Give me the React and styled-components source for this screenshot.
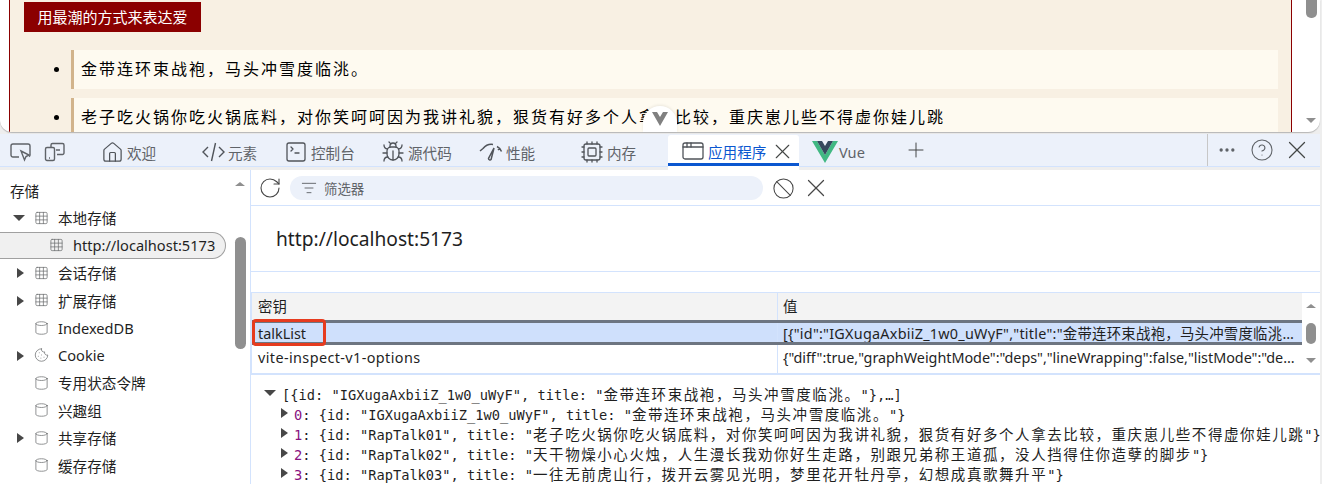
import styled, { createGlobalStyle } from 'styled-components'
import {
  AppWindow,
  Ban,
  Bug,
  CircleHelp,
  Cookie,
  Cpu,
  Cylinder,
  Ellipsis,
  Grid3x3,
  House,
  ListFilter,
  Plus,
  RotateCw,
  SquareTerminal,
  X,
} from 'lucide-react'

const uiFont = `"Noto Sans", "Noto Sans CJK SC", sans-serif`
const monoFont = `"DejaVu Sans Mono", "Noto Sans CJK SC", monospace`
const lineBlue = '#d3e3fd'
const textGrey = '#5f6368'
const textDark = '#1f1f1f'

const GlobalStyle = createGlobalStyle`
  html, body { margin: 0; padding: 0; background: #eeeeee; }
  * { box-sizing: border-box; }
`

const Shell = styled.div`
  display: flex;
  flex-direction: column;
  position: relative;
  width: 1322px;
  height: 484px;
  padding-right: 2px;
  overflow: hidden;
  background: #eeeeee;
  font-family: ${uiFont};
  color: ${textDark};
`

/* inspected page */
const Page = styled.div`
  display: flex;
  flex: none;
  height: 132px;
  padding-left: 9px;
  overflow: hidden;
  background: #ffffff;
  border-radius: 0 0 12px 12px;
  box-shadow: 0 1px 1px #b5b5b5;
`

const Article = styled.div`
  flex: none;
  width: 1283px;
  padding: 2px 13px 0 14px;
  background: #f8f0e3;
  border-left: 1px solid #8b0000;
  border-right: 1px solid #8b0000;
`

const Banner = styled.h3`
  width: 177px;
  height: 30px;
  margin: 0 0 18px;
  background: #8b0000;
  color: #ffffff;
  font: 400 15px/30px "Noto Sans CJK SC", sans-serif;
  text-align: center;
`

const TalkList = styled.ul`
  margin: 0;
  padding: 0 0 0 47px;
`

const TalkItem = styled.li`
  height: 39px;
  margin-bottom: 9px;
  padding-left: 7px;
  background: #fefaf0;
  border-left: 3px solid #d2b48c;
  color: #000000;
  font: 400 16px/36px "Noto Sans CJK SC", serif;
  letter-spacing: 2px;
  white-space: nowrap;
  &::marker { font-size: 13px; }
`

const PageScroll = styled.div`
  display: flex;
  flex: 1;
  flex-direction: column;
  align-items: center;
  justify-content: space-between;
  padding: 0 0 9px 10px;
`

const PageThumb = styled.div`
  width: 11px;
  height: 18px;
  background: #8f8f8f;
  border-radius: 0 0 5px 5px;
`

const Arrow = styled.span`
  flex: none;
  display: block;
  width: 0;
  height: 0;
  ${({ $dir = 'down', $size = 5, $color = '#5f6368' }) => {
    const s = $size
    if ($dir === 'right') return `border-top: ${s}px solid transparent; border-bottom: ${s}px solid transparent; border-left: ${s + 2}px solid ${$color};`
    if ($dir === 'up') return `border-left: ${s}px solid transparent; border-right: ${s}px solid transparent; border-bottom: ${s - 1}px solid ${$color};`
    return `border-left: ${s + 1}px solid transparent; border-right: ${s + 1}px solid transparent; border-top: ${s + 1}px solid ${$color};`
  }}
`

const CollapseBump = styled.div`
  position: absolute;
  left: 643px;
  top: 106px;
  display: flex;
  align-items: center;
  justify-content: center;
  width: 34px;
  height: 26px;
  background: #ffffff;
  border-radius: 17px 17px 0 0;
  box-shadow: 0 -1px 3px rgba(0, 0, 0, 0.08);
`

/* devtools tab strip */
const TabBar = styled.div`
  display: flex;
  flex: none;
  align-items: center;
  height: 33px;
  margin-top: 2px;
  background: #ecf1fa;
  border-bottom: 1px solid ${lineBlue};
`

const ToolIcon = styled.span`
  display: flex;
  flex: none;
  align-items: center;
  justify-content: center;
  width: ${({ $w }) => $w || 34}px;
  color: ${textGrey};
`

const ToolGroup = styled.div`
  display: flex;
  flex: none;
  align-items: center;
  width: 97px;
  padding: 4px 0 0 4px;
`

const Tab = styled.div`
  display: flex;
  flex: none;
  align-items: center;
  width: ${({ $w }) => $w}px;
  height: 32px;
  padding-top: 4px;
  color: ${textGrey};
  font-size: 14.6px;
  white-space: nowrap;
`

const TabIcon = styled.span`
  display: flex;
  flex: none;
  justify-content: center;
  width: 30px;
  color: #50545a;
`

const ActiveTab = styled(Tab)`
  position: relative;
  align-self: flex-end;
  height: 31px;
  margin-right: 13px;
  padding: 4px 0 0 10px;
  background: #ffffff;
  border-radius: 3px 3px 0 0;
  border-bottom: 3px solid #0b57d0;
  color: #0b57d0;
  &::after {
    content: '';
    position: absolute;
    left: 0;
    right: 0;
    top: 28px;
    height: 7px;
    background: linear-gradient(#0b57d0 3px, #ffffff 3px);
  }
`

const TabClose = styled.span`
  display: flex;
  margin-left: 4px;
  color: #444746;
`

const VueMark = styled.span`
  display: flex;
  flex: none;
  width: 27px;
`

const TabSpacer = styled.div`
  flex: 1;
`

const RightTools = styled.div`
  display: flex;
  flex: none;
  align-items: center;
  height: 32px;
  margin-right: 6px;
  padding-left: 2px;
  border-left: 1px solid #c7c7c7;
`

/* application panel */
const Panels = styled.div`
  display: flex;
  flex: 1;
  min-height: 0;
  margin-top: 3px;
  background: #ffffff;
`

const Sidebar = styled.aside`
  display: flex;
  flex: none;
  width: 251px;
  border-right: 1px solid ${lineBlue};
`

const Tree = styled.div`
  flex: none;
  width: 234px;
  padding-top: 8px;
  overflow: hidden;
`

const TreeTitle = styled.div`
  height: 26px;
  padding-left: 10px;
  font-size: 14.6px;
  line-height: 26px;
`

const TreeRow = styled.div`
  display: flex;
  align-items: center;
  position: relative;
  width: ${({ $selected }) => ($selected ? '226px' : '100%')};
  height: 27.5px;
  padding-left: ${({ $level }) => ($level === 2 ? 49 : 34)}px;
  font-size: 14.6px;
  white-space: nowrap;
  ${({ $selected }) =>
    $selected &&
    `background: #f0f0f0;
     border: 1px solid #a0a0a0;
     border-left: 0;
     border-radius: 0 14px 14px 0;`}
`

const TreeToggle = styled.span`
  position: absolute;
  left: ${({ $open }) => ($open ? 13 : 17)}px;
  top: ${({ $open }) => ($open ? 11 : 9)}px;
`

const TreeIcon = styled.span`
  display: flex;
  flex: none;
  justify-content: center;
  width: 15px;
  margin-right: 9px;
  color: #6e7072;
`

const SideScroll = styled.div`
  display: flex;
  flex: 1;
  flex-direction: column;
  align-items: center;
  padding: 12px 4px 0 0;
`

const SideThumb = styled.div`
  width: 11px;
  height: 112px;
  margin-top: 51px;
  background: #8f8f8f;
  border-radius: 6px;
`

const Main = styled.main`
  display: flex;
  flex: 1;
  flex-direction: column;
  min-width: 0;
`

const FilterBar = styled.div`
  display: flex;
  flex: none;
  align-items: center;
  height: 36px;
  padding: 1px 0 0 7px;
  border-bottom: 1px solid ${lineBlue};
`

const Reload = styled.span`
  display: flex;
  width: 32px;
  color: #474747;
`

const FilterPill = styled.div`
  display: flex;
  align-items: center;
  width: 473px;
  height: 24px;
  padding: 0 0 1px 11px;
  gap: 7px;
  background: #ecf1fa;
  border-radius: 12px;
  color: ${textGrey};
  font-size: 13.4px;
`

const BarIcon = styled.span`
  display: flex;
  margin-left: ${({ $gap }) => $gap}px;
  color: #474747;
`

const Origin = styled.div`
  flex: none;
  height: 66px;
  padding-left: 25px;
  font-size: 19.2px;
  line-height: 66px;
  border-bottom: 1px solid ${lineBlue};
`

const StorageTable = styled.div`
  display: flex;
  flex: none;
  position: relative;
  height: 83px;
  margin-top: 20px;
  background: #ffffff;
  border-top: 1px solid ${lineBlue};
  border-bottom: 2px solid ${lineBlue};
  border-left: 1px solid ${lineBlue};
`

const TableBody = styled.div`
  flex: 1;
  min-width: 0;
`

const TableRow = styled.div`
  display: grid;
  grid-template-columns: 525px 1fr;
  height: ${({ $h }) => $h}px;
  font-size: 14.4px;
  ${({ $selected }) =>
    $selected &&
    `background: #cfe0fc;
     border-top: 3px solid #6d7581;
     border-bottom: 3px solid #6d7581;`}
  ${({ $head }) => $head && `background: #f3f3f3;`}
`

const Cell = styled.div`
  padding: 0 6px;
  overflow: hidden;
  line-height: ${({ $lh }) => $lh}px;
  letter-spacing: ${({ $track }) => $track || 0}px;
  text-overflow: ellipsis;
  white-space: nowrap;
  & + & {
    padding-left: 5px;
    border-left: 1px solid ${lineBlue};
  }
`

const TableScroll = styled.div`
  display: flex;
  flex: none;
  flex-direction: column;
  align-items: center;
  width: 18px;
  padding-top: 11px;
`

const TableThumb = styled.div`
  width: 10px;
  height: 21px;
  margin: 15px 0 14px;
  background: #8f8f8f;
  border-radius: 5px;
`

const Callout = styled.div`
  position: absolute;
  left: 0;
  top: 26px;
  width: 74px;
  height: 27px;
  border: 3px solid #e63b1f;
  border-radius: 4px;
`

const Preview = styled.div`
  flex: 1;
  padding-top: 8px;
  overflow: hidden;
  font-family: ${monoFont};
  font-size: 13.7px;
`

const PreviewRow = styled.div`
  display: flex;
  align-items: center;
  height: 20px;
  padding-left: ${({ $indent }) => $indent}px;
  gap: 6px;
  white-space: nowrap;
`

const Index = styled.span`
  color: #881280;
`

const Han = styled.span`
  font-size: 14.5px;
  letter-spacing: 1.57px;
`

const VueLogo = () => (
  <svg width="26" height="24" viewBox="0 0 26 22">
    <path d="M0 0h5l8 14L21 0h5L13 22z" fill="#41b883" />
    <path d="M5 0h5l3 5 3-5h5l-8 14z" fill="#35495e" />
  </svg>
)

const ElementsIcon = () => (
  <svg width="23" height="20" viewBox="0 0 23 20" fill="none" stroke="#50545a" strokeWidth="1.4">
    <path d="M6 5l-5 5 5 5M17 5l5 5-5 5M13.5 1L9.500 19" />
  </svg>
)

const InspectIcon = () => (
  <svg width="22" height="20" viewBox="0 0 22 20" fill="none" stroke="#5f6368" strokeWidth="1.4">
    <path d="M9 15H3a2 2 0 0 1-2-2V4a2 2 0 0 1 2-2h15a2 2 0 0 1 2 2v9a2 2 0 0 1-1 1.700" />
    <path d="M11 9l8 4-3 1.500-1.500 3.500z" />
  </svg>
)

const DeviceIcon = () => (
  <svg width="22" height="20" viewBox="0 0 22 20" fill="none" stroke="#5f6368" strokeWidth="1.4">
    <path d="M7 5V3a1.500 1.500 0 0 1 1.500-1.500h10A1.500 1.500 0 0 1 20 3v8a1.500 1.500 0 0 1-1.500 1.500H13" />
    <rect x="1.500" y="5.500" width="9" height="13" rx="1.500" />
    <path d="M12 8h4M5 16h1" />
  </svg>
)

const PerformanceIcon = () => (
  <svg width="24" height="20" viewBox="0 0 24 20" fill="none" stroke="#50545a" strokeWidth="1.5">
    <path d="M1 9l3-2.500M4 6.500C7 3 11 2 14 2.500M18 4.500c2 1 3.500 2.500 4.500 5M21 6l-2 2" />
    <path d="M15 6L9.500 16.500a1.500 1.500 0 0 0 2.600 1z" />
  </svg>
)

const tabs = [
  { label: '欢迎', width: 101, icon: <House size={23} strokeWidth={1.3} /> },
  { label: '元素', width: 83, icon: <ElementsIcon /> },
  { label: '控制台', width: 97, icon: <SquareTerminal size={24} strokeWidth={1.3} /> },
  { label: '源代码', width: 98, icon: <Bug size={24} strokeWidth={1.3} /> },
  { label: '性能', width: 101, icon: <PerformanceIcon /> },
  { label: '内存', width: 91, icon: <Cpu size={24} strokeWidth={1.3} /> },
]

const grid = <Grid3x3 size={16} strokeWidth={1.2} />
const can = <Cylinder size={16} strokeWidth={1.2} />

const treeRows = [
  { label: '本地存储', icon: grid, toggle: 'open' },
  { label: 'http://localhost:5173', icon: grid, level: 2, selected: true },
  { label: '会话存储', icon: grid, toggle: 'closed' },
  { label: '扩展存储', icon: grid, toggle: 'closed' },
  { label: 'IndexedDB', icon: can },
  { label: 'Cookie', icon: <Cookie size={16} strokeWidth={1.2} />, toggle: 'closed' },
  { label: '专用状态令牌', icon: can },
  { label: '兴趣组', icon: can },
  { label: '共享存储', icon: can, toggle: 'closed' },
  { label: '缓存存储', icon: can },
]

const previewRows = [
  { index: 0, id: 'IGXugaAxbiiZ_1w0_uWyF', title: '金带连环束战袍，马头冲雪度临洮。' },
  { index: 1, id: 'RapTalk01', title: '老子吃火锅你吃火锅底料，对你笑呵呵因为我讲礼貌，狠货有好多个人拿去比较，重庆崽儿些不得虚你娃儿跳' },
  { index: 2, id: 'RapTalk02', title: '天干物燥小心火烛，人生漫长我劝你好生走路，别跟兄弟称王道孤，没人挡得住你造孽的脚步' },
  { index: 3, id: 'RapTalk03', title: '一往无前虎山行，拨开云雾见光明，梦里花开牡丹亭，幻想成真歌舞升平' },
]

const RecordText = ({ id, title, tail = '}' }) => (
  <>
    {`{id: "${id}", title: "`}
    <Han>{title}</Han>
    {`"${tail}`}
  </>
)

export default function App() {
  return (
    <Shell>
      <GlobalStyle />

      <Page>
        <Article>
          <Banner>用最潮的方式来表达爱</Banner>
          <TalkList>
            <TalkItem>金带连环束战袍，马头冲雪度临洮。</TalkItem>
            <TalkItem>老子吃火锅你吃火锅底料，对你笑呵呵因为我讲礼貌，狠货有好多个人拿去比较，重庆崽儿些不得虚你娃儿跳</TalkItem>
          </TalkList>
        </Article>
        <PageScroll>
          <PageThumb />
          <Arrow $size={4} $color="#8f8f8f" />
        </PageScroll>
      </Page>

      <CollapseBump>
        <svg width="16" height="14" viewBox="0 0 16 14">
          <path d="M0 0h5l3 5 3-5h5L8 14z" fill="#808080" />
        </svg>
      </CollapseBump>

      <TabBar>
        <ToolGroup>
          <ToolIcon><InspectIcon /></ToolIcon>
          <ToolIcon><DeviceIcon /></ToolIcon>
        </ToolGroup>
        {tabs.map((tab) => (
          <Tab key={tab.label} $w={tab.width}>
            <TabIcon>{tab.icon}</TabIcon>
            {tab.label}
          </Tab>
        ))}
        <ActiveTab $w={131}>
          <TabIcon><AppWindow size={24} strokeWidth={1.3} /></TabIcon>
          应用程序
          <TabClose><X size={25} strokeWidth={1.1} /></TabClose>
        </ActiveTab>
        <Tab $w={92}>
          <VueMark><VueLogo /></VueMark>
          Vue
        </Tab>
        <ToolIcon $w={24}><Plus size={30} strokeWidth={1} color="#444746" /></ToolIcon>
        <TabSpacer />
        <RightTools>
          <ToolIcon $w={34}><Ellipsis size={20} strokeWidth={2} /></ToolIcon>
          <ToolIcon $w={36}><CircleHelp size={24} strokeWidth={1.1} /></ToolIcon>
          <ToolIcon $w={34}><X size={30} strokeWidth={1} color="#444746" /></ToolIcon>
        </RightTools>
      </TabBar>

      <Panels>
        <Sidebar>
          <Tree>
            <TreeTitle>存储</TreeTitle>
            {treeRows.map((row) => (
              <TreeRow key={row.label} $level={row.level} $selected={row.selected}>
                {row.toggle && (
                  <TreeToggle $open={row.toggle === 'open'}>
                    <Arrow $dir={row.toggle === 'open' ? 'down' : 'right'} $color="#474747" />
                  </TreeToggle>
                )}
                <TreeIcon>{row.icon}</TreeIcon>
                {row.label}
              </TreeRow>
            ))}
          </Tree>
          <SideScroll>
            <Arrow $dir="up" $size={5} $color="#8f8f8f" />
            <SideThumb />
          </SideScroll>
        </Sidebar>

        <Main>
          <FilterBar>
            <Reload><RotateCw size={24} strokeWidth={1.1} /></Reload>
            <FilterPill>
              <ListFilter size={16} strokeWidth={1.4} />
              筛选器
            </FilterPill>
            <BarIcon $gap={9}><Ban size={23} strokeWidth={1.1} /></BarIcon>
            <BarIcon $gap={6}><X size={30} strokeWidth={1} /></BarIcon>
          </FilterBar>

          <Origin>http://localhost:5173</Origin>

          <StorageTable>
            <TableBody>
              <TableRow $head $h={27}>
                <Cell $lh={27}>密钥</Cell>
                <Cell $lh={27}>值</Cell>
              </TableRow>
              <TableRow $selected $h={25}>
                <Cell $lh={21}>talkList</Cell>
                <Cell $lh={21} $track={0.25}>{'[{"id":"IGXugaAxbiiZ_1w0_uWyF","title":"金带连环束战袍，马头冲雪度临洮。"},{"id":"RapTalk01","title":"老子吃火锅"}]'}</Cell>
              </TableRow>
              <TableRow $h={28}>
                <Cell $lh={26} $track={0.4}>vite-inspect-v1-options</Cell>
                <Cell $lh={26} $track={-0.03}>{'{"diff":true,"graphWeightMode":"deps","lineWrapping":false,"listMode":"detailed","sort":"default"}'}</Cell>
              </TableRow>
            </TableBody>
            <TableScroll>
              <Arrow $dir="up" $size={5} $color="#8f8f8f" />
              <TableThumb />
              <Arrow $size={4} $color="#8f8f8f" />
            </TableScroll>
            <Callout />
          </StorageTable>

          <Preview>
            <PreviewRow $indent={13}>
              <Arrow $color="#474747" />
              <span>
                [<RecordText id="IGXugaAxbiiZ_1w0_uWyF" title="金带连环束战袍，马头冲雪度临洮。" tail="},…]" />
              </span>
            </PreviewRow>
            {previewRows.map((row) => (
              <PreviewRow key={row.index} $indent={30}>
                <Arrow $dir="right" $color="#474747" />
                <span>
                  <Index>{row.index}</Index>
                  {': '}
                  <RecordText id={row.id} title={row.title} />
                </span>
              </PreviewRow>
            ))}
          </Preview>
        </Main>
      </Panels>
    </Shell>
  )
}
